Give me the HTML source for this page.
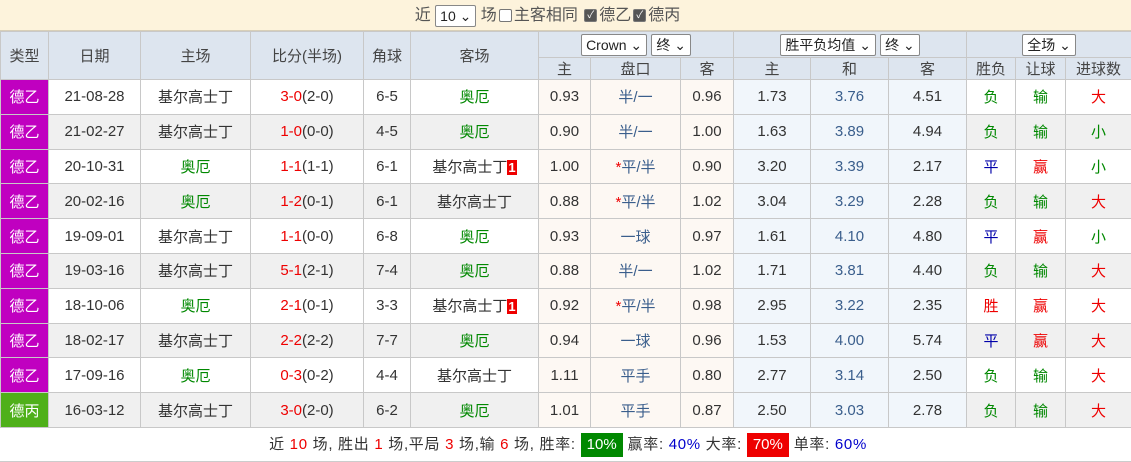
<!DOCTYPE html>
<html><head><meta charset="utf-8"><style>
*{margin:0;padding:0;box-sizing:border-box}
body{width:1131px;height:462px;overflow:hidden;background:#fff;font-family:"Liberation Sans","Noto Sans CJK SC",sans-serif;font-size:14px;color:#333}
.top{height:31px;background:#fdf3dc;border-bottom:1px solid #d8cfb8;text-align:center;line-height:31px;font-size:16px;color:#555;padding-right:36px}
.sel{display:inline-block;border:1px solid #888;background:#fff;border-radius:2px;font-size:14px;line-height:20px;padding:0 4px;color:#222;vertical-align:middle}
.cb{display:inline-block;width:13px;height:13px;border:1px solid #777;border-radius:2px;background:#fff;vertical-align:middle;margin:0 2px}
.cb.on{background:#555;color:#fff;font-size:10px;line-height:11px;text-align:center}
table{border-collapse:collapse;table-layout:fixed;width:1131px}
td{border:1px solid #c8c8c8;text-align:center;white-space:nowrap;overflow:hidden}
.h td{background:#dde5ef;color:#444;font-size:15px}
.r td{height:34.8px;font-size:15px}
.r.g td{background:#f0f0f0}
.r td.a{background:#fdf8f3}
.r td.b{background:#f1f6fb}
.t{color:#fff;background:#c000c0!important}
.t2{color:#fff;background:#4fb01a!important}
.gr{color:#080}.rd{color:#e00}.bl{color:#3a5e8c}.nv{color:#00a}
.one{background:#e00;color:#fff;font-weight:bold;font-size:13px;padding:0 1px}
.foot{height:34px;line-height:34px;text-align:right;padding-right:264px;font-size:15px;border-bottom:1px solid #ccc;letter-spacing:0.7px}
.box{display:inline-block;color:#fff;padding:0 6px;line-height:24px;letter-spacing:0}
</style></head><body>
<div class="top">近 <span class="sel">10 ⌄</span> 场<span class="cb"></span>主客相同 <span class="cb on">✓</span>德乙<span class="cb on">✓</span>德丙</div>
<table>
<colgroup><col style="width:48px"><col style="width:92px"><col style="width:110px"><col style="width:113px"><col style="width:47px"><col style="width:128px"><col style="width:52px"><col style="width:90px"><col style="width:53px"><col style="width:77px"><col style="width:78px"><col style="width:78px"><col style="width:49px"><col style="width:50px"><col style="width:66px"></colgroup>
<tr class="h"><td rowspan="2" style="height:48px">类型</td><td rowspan="2">日期</td><td rowspan="2">主场</td><td rowspan="2">比分(半场)</td><td rowspan="2">角球</td><td rowspan="2">客场</td>
<td colspan="3" style="height:26px"><span class="sel">Crown ⌄</span> <span class="sel">终 ⌄</span></td><td colspan="3"><span class="sel">胜平负均值 ⌄</span> <span class="sel">终 ⌄</span></td><td colspan="3"><span class="sel">全场 ⌄</span></td></tr>
<tr class="h"><td style="height:22px">主</td><td>盘口</td><td>客</td><td>主</td><td>和</td><td>客</td><td>胜负</td><td>让球</td><td>进球数</td></tr>
<tr class="r"><td class="t">德乙</td><td>21-08-28</td><td>基尔高士丁</td><td><span class="rd">3-0</span>(2-0)</td><td>6-5</td><td class="gr">奥厄</td><td class="a">0.93</td><td class="a bl">半/一</td><td class="a">0.96</td><td class="b">1.73</td><td class="b bl">3.76</td><td class="b">4.51</td><td class="gr">负</td><td class="gr">输</td><td class="rd">大</td></tr>
<tr class="r g"><td class="t">德乙</td><td>21-02-27</td><td>基尔高士丁</td><td><span class="rd">1-0</span>(0-0)</td><td>4-5</td><td class="gr">奥厄</td><td class="a">0.90</td><td class="a bl">半/一</td><td class="a">1.00</td><td class="b">1.63</td><td class="b bl">3.89</td><td class="b">4.94</td><td class="gr">负</td><td class="gr">输</td><td class="gr">小</td></tr>
<tr class="r"><td class="t">德乙</td><td>20-10-31</td><td class="gr">奥厄</td><td><span class="rd">1-1</span>(1-1)</td><td>6-1</td><td>基尔高士丁<span class="one">1</span></td><td class="a">1.00</td><td class="a bl"><span class="rd">*</span>平/半</td><td class="a">0.90</td><td class="b">3.20</td><td class="b bl">3.39</td><td class="b">2.17</td><td class="nv">平</td><td class="rd">赢</td><td class="gr">小</td></tr>
<tr class="r g"><td class="t">德乙</td><td>20-02-16</td><td class="gr">奥厄</td><td><span class="rd">1-2</span>(0-1)</td><td>6-1</td><td>基尔高士丁</td><td class="a">0.88</td><td class="a bl"><span class="rd">*</span>平/半</td><td class="a">1.02</td><td class="b">3.04</td><td class="b bl">3.29</td><td class="b">2.28</td><td class="gr">负</td><td class="gr">输</td><td class="rd">大</td></tr>
<tr class="r"><td class="t">德乙</td><td>19-09-01</td><td>基尔高士丁</td><td><span class="rd">1-1</span>(0-0)</td><td>6-8</td><td class="gr">奥厄</td><td class="a">0.93</td><td class="a bl">一球</td><td class="a">0.97</td><td class="b">1.61</td><td class="b bl">4.10</td><td class="b">4.80</td><td class="nv">平</td><td class="rd">赢</td><td class="gr">小</td></tr>
<tr class="r g"><td class="t">德乙</td><td>19-03-16</td><td>基尔高士丁</td><td><span class="rd">5-1</span>(2-1)</td><td>7-4</td><td class="gr">奥厄</td><td class="a">0.88</td><td class="a bl">半/一</td><td class="a">1.02</td><td class="b">1.71</td><td class="b bl">3.81</td><td class="b">4.40</td><td class="gr">负</td><td class="gr">输</td><td class="rd">大</td></tr>
<tr class="r"><td class="t">德乙</td><td>18-10-06</td><td class="gr">奥厄</td><td><span class="rd">2-1</span>(0-1)</td><td>3-3</td><td>基尔高士丁<span class="one">1</span></td><td class="a">0.92</td><td class="a bl"><span class="rd">*</span>平/半</td><td class="a">0.98</td><td class="b">2.95</td><td class="b bl">3.22</td><td class="b">2.35</td><td class="rd">胜</td><td class="rd">赢</td><td class="rd">大</td></tr>
<tr class="r g"><td class="t">德乙</td><td>18-02-17</td><td>基尔高士丁</td><td><span class="rd">2-2</span>(2-2)</td><td>7-7</td><td class="gr">奥厄</td><td class="a">0.94</td><td class="a bl">一球</td><td class="a">0.96</td><td class="b">1.53</td><td class="b bl">4.00</td><td class="b">5.74</td><td class="nv">平</td><td class="rd">赢</td><td class="rd">大</td></tr>
<tr class="r"><td class="t">德乙</td><td>17-09-16</td><td class="gr">奥厄</td><td><span class="rd">0-3</span>(0-2)</td><td>4-4</td><td>基尔高士丁</td><td class="a">1.11</td><td class="a bl">平手</td><td class="a">0.80</td><td class="b">2.77</td><td class="b bl">3.14</td><td class="b">2.50</td><td class="gr">负</td><td class="gr">输</td><td class="rd">大</td></tr>
<tr class="r g"><td class="t2">德丙</td><td>16-03-12</td><td>基尔高士丁</td><td><span class="rd">3-0</span>(2-0)</td><td>6-2</td><td class="gr">奥厄</td><td class="a">1.01</td><td class="a bl">平手</td><td class="a">0.87</td><td class="b">2.50</td><td class="b bl">3.03</td><td class="b">2.78</td><td class="gr">负</td><td class="gr">输</td><td class="rd">大</td></tr>
</table>
<div class="foot">近 <span class="rd">10</span> 场, 胜出 <span class="rd">1</span> 场,平局 <span class="rd">3</span> 场,输 <span class="rd">6</span> 场, 胜率: <span class="box" style="background:#080">10%</span> 赢率: <span style="color:#00c">40%</span> 大率: <span class="box" style="background:#e00">70%</span> 单率: <span style="color:#00c">60%</span></div>
</body></html>
